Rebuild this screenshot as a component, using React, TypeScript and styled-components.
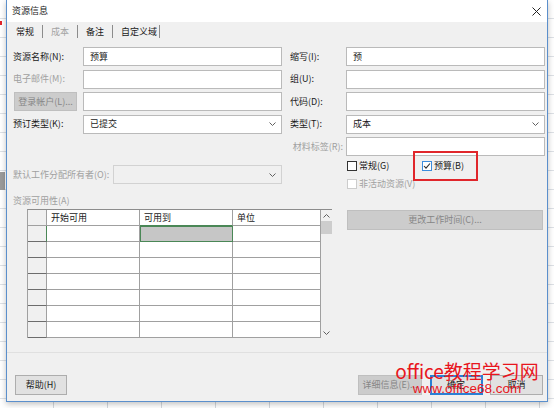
import styled, { createGlobalStyle } from 'styled-components'

const GlobalStyle = createGlobalStyle`
  html, body {
    margin: 0;
    padding: 0;
  }
  body {
    font-family: "Noto Sans CJK SC", "Liberation Sans", sans-serif;
    font-size: 9px;
    line-height: 12px;
    color: #1a1a1a;
  }
`

// spreadsheet behind the dialog
const Screen = styled.div`
  position: relative;
  width: 554px;
  height: 408px;
  overflow: hidden;
  background-color: #fff;
  background-image:
    linear-gradient(#e2252b, #e2252b),
    linear-gradient(#9b9b9b, #9b9b9b),
    repeating-linear-gradient(to right, transparent 0 53px, #d3d8de 53px 54px),
    repeating-linear-gradient(to bottom, transparent 0 18px, #dde1e6 18px 19px);
  background-size: 2px 4px, 5px 18px, auto, auto;
  background-position: 0 21px, 0 172px, 0 0, 0 0;
  background-repeat: no-repeat, no-repeat, repeat, repeat;
`

const Dialog = styled.div`
  margin-left: 6px;
  width: 540px;
  height: 401px;
  border: 1px solid #5b8fcc;
  border-top: none;
  background: #f0f0f0;
  box-shadow: 0 2px 6px rgba(0, 0, 0, 0.25);
  display: flex;
  flex-direction: column;
`

const TitleBar = styled.div`
  height: 22px;
  flex-shrink: 0;
  background: #fff;
  display: flex;
  align-items: center;
  justify-content: space-between;
  padding: 0 6px 0 5px;
`

const TabStrip = styled.div`
  height: 17px;
  flex-shrink: 0;
  display: flex;
  align-items: flex-start;
  padding: 3px 0 0 1px;
  box-sizing: border-box;
`

const Tab = styled.div<{ $disabled?: boolean; $last?: boolean }>`
  line-height: 13px;
  padding: 0 ${(p) => (p.$last ? '2px' : '8px')} 0 8px;
  border-right: 1px solid #8c8c8c;
  color: ${(p) => (p.$disabled ? '#a3a3a3' : '#1a1a1a')};
`

const Panel = styled.div`
  height: 314px;
  flex-shrink: 0;
  box-sizing: border-box;
  padding: 8px 2px 0 6px;
  border-bottom: 1px solid #e0e0e0;
  display: flex;
  gap: 8px;
`

const Column = styled.div<{ $w: number }>`
  width: ${(p) => p.$w}px;
  display: flex;
  flex-direction: column;
`

const FieldStack = styled.div`
  display: flex;
  flex-direction: column;
  gap: 3.5px;
`

const FieldRow = styled.div<{ $mt?: number }>`
  height: 19px;
  display: flex;
  align-items: center;
  margin-top: ${(p) => p.$mt ?? 0}px;
`

const Label = styled.div<{ $w: number; $disabled?: boolean; $right?: boolean }>`
  width: ${(p) => p.$w}px;
  flex-shrink: 0;
  box-sizing: border-box;
  white-space: nowrap;
  text-align: ${(p) => (p.$right ? 'right' : 'left')};
  padding-right: ${(p) => (p.$right ? '3px' : '0')};
  color: ${(p) => (p.$disabled ? '#a0a0a0' : '#1a1a1a')};
`

const TextBox = styled.div<{ $disabled?: boolean }>`
  flex: 1;
  height: 19px;
  box-sizing: border-box;
  border: 1px solid ${(p) => (p.$disabled ? '#d2d2d2' : '#bababa')};
  background: ${(p) => (p.$disabled ? '#f0f0f0' : '#fff')};
  display: flex;
  align-items: center;
  justify-content: space-between;
  padding: 0 5px 0 6px;
`

const Button = styled.div<{ $w: number; $h?: number; $disabled?: boolean; $primary?: boolean }>`
  width: ${(p) => p.$w}px;
  height: ${(p) => p.$h ?? 20}px;
  flex-shrink: 0;
  box-sizing: border-box;
  display: flex;
  align-items: center;
  justify-content: center;
  white-space: nowrap;
  background: ${(p) => (p.$disabled ? '#cccccc' : '#e1e1e1')};
  border: ${(p) => (p.$primary ? '2px solid #2a7fd4' : p.$disabled ? '1px solid #bfbfbf' : '1px solid #adadad')};
  color: ${(p) => (p.$disabled ? '#868686' : '#1a1a1a')};
`

const LoginButton = styled(Button)`
  margin: 0 6px 0 1px;
`

const SectionLabel = styled.div`
  margin-top: 11px;
  color: #a0a0a0;
`

const TableBox = styled.div`
  margin: 2px 0 0 14px;
  display: flex;
`

const Grid = styled.div`
  display: grid;
  grid-template-columns: 19px 93px 93px 88px;
  grid-template-rows: 16px repeat(7, 16px);
  border-top: 1px solid #8c8c8c;
  border-left: 1px solid #a0a0a0;
`

const HeadCell = styled.div<{ $active?: boolean; $corner?: boolean }>`
  box-sizing: border-box;
  background: ${(p) => (p.$corner ? '#f0f0f0' : '#fff')};
  border-right: 1px solid #a0a0a0;
  border-bottom: 1px solid ${(p) => (p.$active ? '#4a8756' : '#a0a0a0')};
  padding-left: 4px;
  line-height: 15px;
`

const RowHead = styled.div<{ $active?: boolean }>`
  box-sizing: border-box;
  background: #f0f0f0;
  border-right: 1px solid ${(p) => (p.$active ? '#4a8756' : '#a0a0a0')};
  border-bottom: 1px solid #6c6c6c;
`

const Cell = styled.div<{ $selected?: boolean }>`
  box-sizing: border-box;
  background: ${(p) => (p.$selected ? '#c6c6c6' : '#fff')};
  border-right: 1px solid #a0a0a0;
  border-bottom: 1px solid #a0a0a0;
  outline: ${(p) => (p.$selected ? '1px solid #4a8756' : 'none')};
  outline-offset: -1px;
`

const ScrollBar = styled.div`
  width: 13px;
  box-sizing: border-box;
  border-top: 1px solid #8c8c8c;
  background: #f0f0f0;
  display: flex;
  flex-direction: column;
  align-items: center;
`

const ScrollArrow = styled.div`
  height: 11px;
  display: flex;
  align-items: center;
  justify-content: center;
`

const Thumb = styled.div`
  width: 11px;
  height: 13px;
  background: #cdcdcd;
`

const ScrollTrack = styled.div`
  flex: 1;
`

const CheckRow = styled.div<{ $mt: number }>`
  height: 14px;
  margin-top: ${(p) => p.$mt}px;
  padding-left: 57px;
  display: flex;
  align-items: center;
`

const CheckItem = styled.div<{ $w?: number; $disabled?: boolean }>`
  width: ${(p) => (p.$w ? `${p.$w}px` : 'auto')};
  display: flex;
  align-items: center;
  gap: 2px;
  color: ${(p) => (p.$disabled ? '#a0a0a0' : '#1a1a1a')};
`

const Box = styled.div<{ $checked?: boolean; $disabled?: boolean }>`
  width: 10px;
  height: 10px;
  box-sizing: border-box;
  background: #fff;
  border: 1px solid ${(p) => (p.$disabled ? '#cccccc' : p.$checked ? '#3c8ddd' : '#333')};
  display: flex;
  align-items: center;
  justify-content: center;
`

const WideButton = styled(Button)`
  margin: 19px 0 0 57px;
`

const Footer = styled.div`
  flex: 1;
  display: flex;
  align-items: flex-start;
  justify-content: space-between;
  padding: 22px 4px 0 8px;
`

const ButtonGroup = styled.div`
  display: flex;
  gap: 7.5px;
`

// annotation + watermark drawn over the screenshot
const Highlight = styled.div`
  position: absolute;
  left: 413px;
  top: 151px;
  width: 65px;
  height: 30px;
  box-sizing: border-box;
  border: 2px solid #e0262b;
`

const Watermark = styled.div`
  position: absolute;
  left: 392px;
  top: 359px;
  width: 150px;
  display: flex;
  flex-direction: column;
  align-items: center;
  color: #e8161e;
  pointer-events: none;
`

const MarkTitle = styled.div`
  font-size: 19px;
  line-height: 23px;
  white-space: nowrap;
`

const MarkUrl = styled.div`
  font-family: "Liberation Sans", Arial, sans-serif;
  font-size: 13.5px;
  line-height: 14px;
  white-space: nowrap;
`

function Chevron({ up }: { up?: boolean }) {
  return (
    <svg width="7" height="4" viewBox="0 0 7 4">
      <polyline points={up ? '0.5,3.5 3.5,0.5 6.5,3.5' : '0.5,0.5 3.5,3.5 6.5,0.5'} fill="none" stroke="#606060" strokeWidth="1" />
    </svg>
  )
}

function Check() {
  return (
    <svg width="8" height="8" viewBox="0 0 8 8">
      <polyline points="1,4 3,6.2 7,1.5" fill="none" stroke="#2b2b2b" strokeWidth="1.1" />
    </svg>
  )
}

function CloseIcon() {
  return (
    <svg width="9" height="9" viewBox="0 0 9 9">
      <line x1="0.5" y1="0.5" x2="8.5" y2="8.5" stroke="#222" strokeWidth="1" />
      <line x1="8.5" y1="0.5" x2="0.5" y2="8.5" stroke="#222" strokeWidth="1" />
    </svg>
  )
}

const rows = [0, 1, 2, 3, 4, 5, 6]

function App() {
  return (
    <Screen>
      <GlobalStyle />
      <Dialog>
        <TitleBar>
          <span>资源信息</span>
          <CloseIcon />
        </TitleBar>
        <TabStrip>
          <Tab>常规</Tab>
          <Tab $disabled>成本</Tab>
          <Tab>备注</Tab>
          <Tab $last>自定义域</Tab>
        </TabStrip>
        <Panel>
          <Column $w={269}>
            <FieldStack>
              <FieldRow>
                <Label $w={70}>资源名称(N):</Label>
                <TextBox>预算</TextBox>
              </FieldRow>
              <FieldRow>
                <Label $w={70} $disabled>电子邮件(M):</Label>
                <TextBox />
              </FieldRow>
              <FieldRow>
                <LoginButton $w={63} $h={19} $disabled>登录帐户(L)...</LoginButton>
                <TextBox />
              </FieldRow>
              <FieldRow>
                <Label $w={70}>预订类型(K):</Label>
                <TextBox>
                  已提交
                  <Chevron />
                </TextBox>
              </FieldRow>
            </FieldStack>
            <FieldRow $mt={31.5}>
              <Label $w={100} $disabled>默认工作分配所有者(O):</Label>
              <TextBox $disabled>
                <span />
                <Chevron />
              </TextBox>
            </FieldRow>
            <SectionLabel>资源可用性(A)</SectionLabel>
            <TableBox>
              <Grid>
                <HeadCell $corner />
                <HeadCell>开始可用</HeadCell>
                <HeadCell $active>可用到</HeadCell>
                <HeadCell>单位</HeadCell>
                {rows.map((r) => (
                  <>
                    <RowHead key={`h${r}`} $active={r === 0} />
                    <Cell key={`a${r}`} />
                    <Cell key={`b${r}`} $selected={r === 0} />
                    <Cell key={`c${r}`} />
                  </>
                ))}
              </Grid>
              <ScrollBar>
                <ScrollArrow>
                  <Chevron up />
                </ScrollArrow>
                <Thumb />
                <ScrollTrack />
                <ScrollArrow>
                  <Chevron />
                </ScrollArrow>
              </ScrollBar>
            </TableBox>
          </Column>
          <Column $w={255}>
            <FieldStack>
              <FieldRow>
                <Label $w={56}>缩写(I):</Label>
                <TextBox>预</TextBox>
              </FieldRow>
              <FieldRow>
                <Label $w={56}>组(U):</Label>
                <TextBox />
              </FieldRow>
              <FieldRow>
                <Label $w={56}>代码(D):</Label>
                <TextBox />
              </FieldRow>
              <FieldRow>
                <Label $w={56}>类型(T):</Label>
                <TextBox>
                  成本
                  <Chevron />
                </TextBox>
              </FieldRow>
              <FieldRow>
                <Label $w={56} $disabled $right>材料标签(R):</Label>
                <TextBox />
              </FieldRow>
            </FieldStack>
            <CheckRow $mt={3}>
              <CheckItem $w={75}>
                <Box />
                常规(G)
              </CheckItem>
              <CheckItem>
                <Box $checked>
                  <Check />
                </Box>
                预算(B)
              </CheckItem>
            </CheckRow>
            <CheckRow $mt={4}>
              <CheckItem $disabled>
                <Box $disabled />
                非活动资源(V)
              </CheckItem>
            </CheckRow>
            <WideButton $w={196} $disabled>更改工作时间(C)...</WideButton>
          </Column>
        </Panel>
        <Footer>
          <Button $w={52}>帮助(H)</Button>
          <ButtonGroup>
            <Button $w={64} $disabled>详细信息(E)...</Button>
            <Button $w={53} $primary>确定</Button>
            <Button $w={53}>取消</Button>
          </ButtonGroup>
        </Footer>
      </Dialog>
      <Highlight />
      <Watermark>
        <MarkTitle>office教程学习网</MarkTitle>
        <MarkUrl>www.office68.com</MarkUrl>
      </Watermark>
    </Screen>
  )
}

export default App
